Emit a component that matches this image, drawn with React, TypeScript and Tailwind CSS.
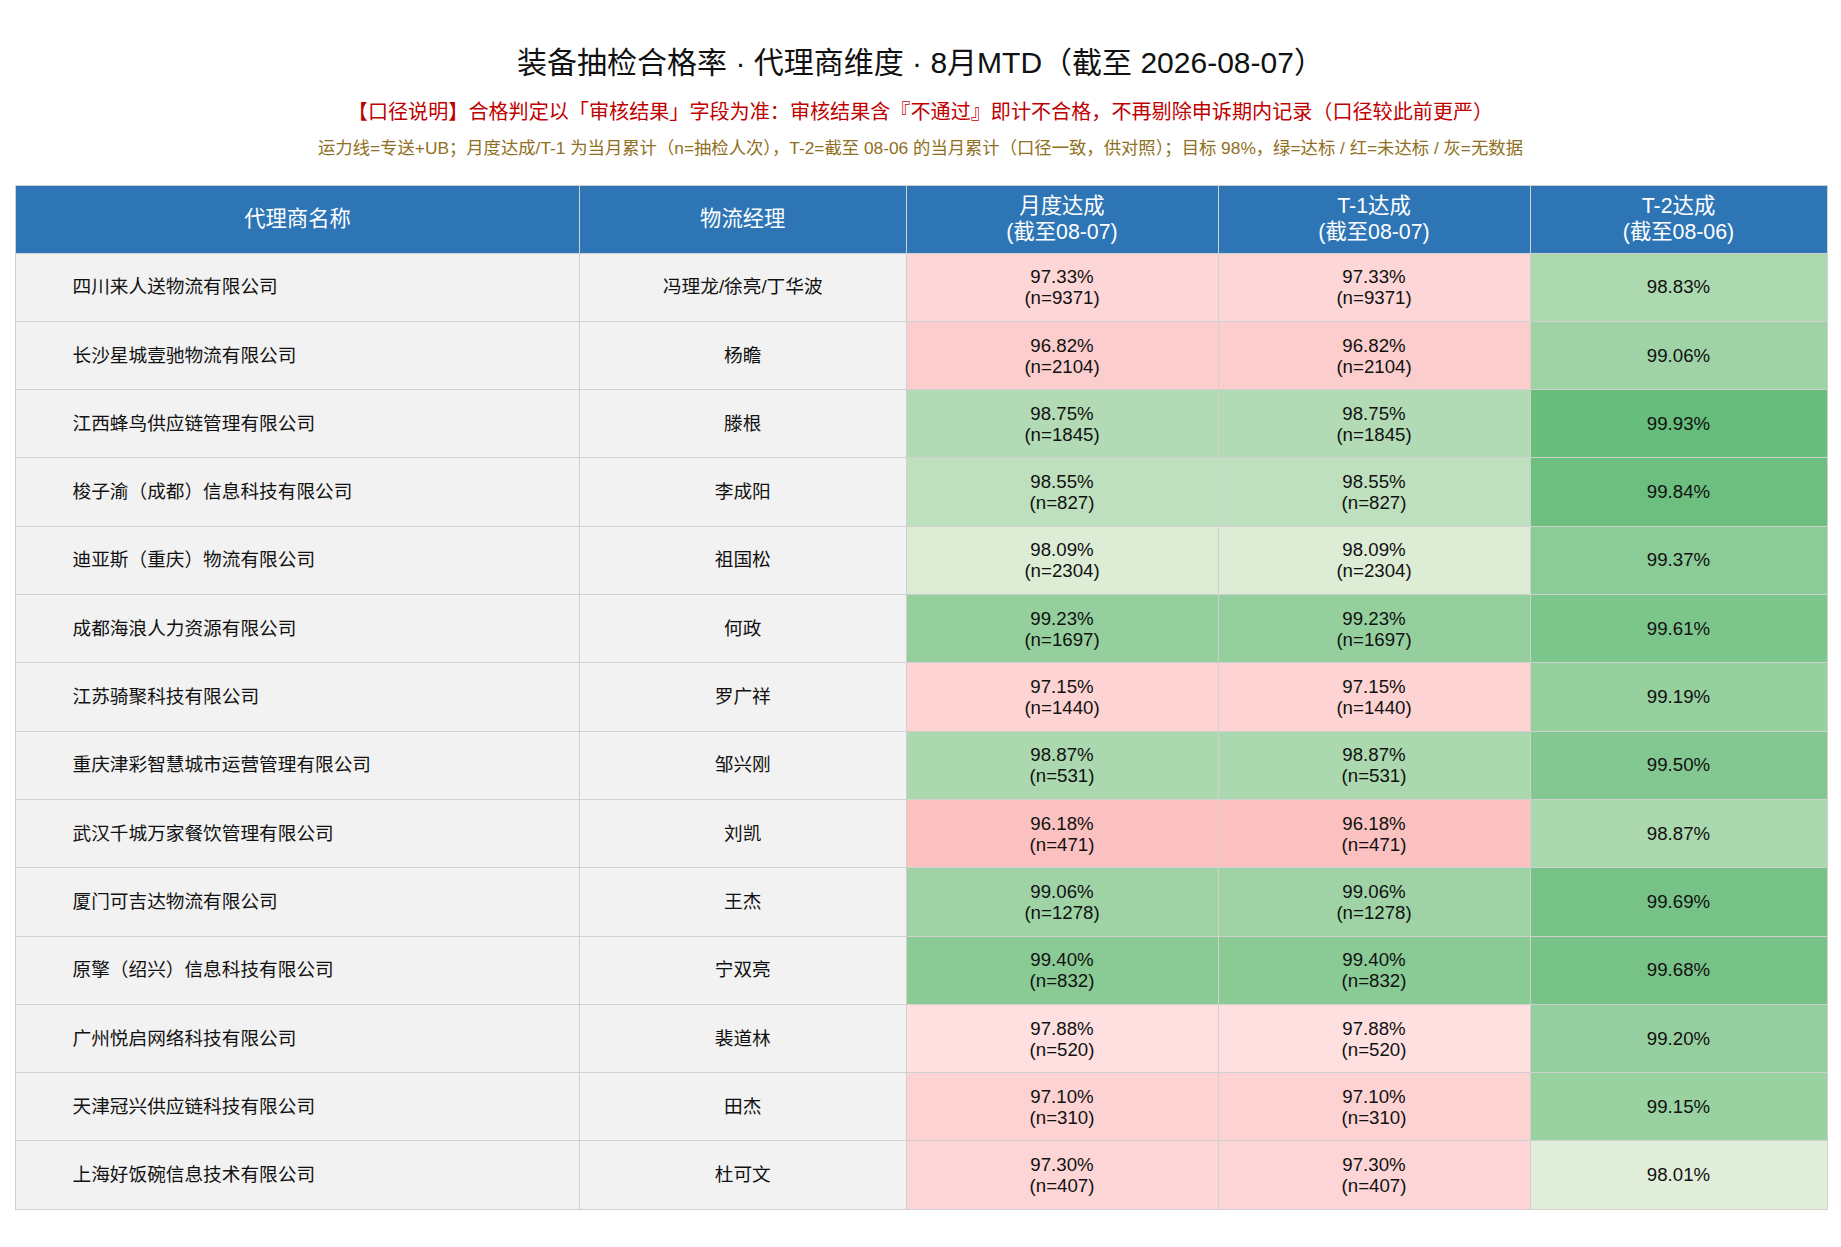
import React from "react";

type Row = {
  name: string;
  mgr: string;
  m: string;
  n: string;
  mBg: string;
  t2: string;
  t2Bg: string;
};

const rows: Row[] = [
  { name: "四川来人送物流有限公司", mgr: "冯理龙/徐亮/丁华波", m: "97.33%", n: "9371", mBg: "bg-[#fdd6d7]", t2: "98.83%", t2Bg: "bg-[#add9b1]" },
  { name: "长沙星城壹驰物流有限公司", mgr: "杨瞻", m: "96.82%", n: "2104", mBg: "bg-[#fccdcd]", t2: "99.06%", t2Bg: "bg-[#9fd3a6]" },
  { name: "江西蜂鸟供应链管理有限公司", mgr: "滕根", m: "98.75%", n: "1845", mBg: "bg-[#b2dbb5]", t2: "99.93%", t2Bg: "bg-[#67bd7c]" },
  { name: "梭子渝（成都）信息科技有限公司", mgr: "李成阳", m: "98.55%", n: "827", mBg: "bg-[#bfe0be]", t2: "99.84%", t2Bg: "bg-[#6dbf80]" },
  { name: "迪亚斯（重庆）物流有限公司", mgr: "祖国松", m: "98.09%", n: "2304", mBg: "bg-[#dcecd5]", t2: "99.37%", t2Bg: "bg-[#8bcb97]" },
  { name: "成都海浪人力资源有限公司", mgr: "何政", m: "99.23%", n: "1697", mBg: "bg-[#94cf9d]", t2: "99.61%", t2Bg: "bg-[#7cc58b]" },
  { name: "江苏骑聚科技有限公司", mgr: "罗广祥", m: "97.15%", n: "1440", mBg: "bg-[#fdd3d3]", t2: "99.19%", t2Bg: "bg-[#96d09f]" },
  { name: "重庆津彩智慧城市运营管理有限公司", mgr: "邹兴刚", m: "98.87%", n: "531", mBg: "bg-[#abd8af]", t2: "99.50%", t2Bg: "bg-[#83c890]" },
  { name: "武汉千城万家餐饮管理有限公司", mgr: "刘凯", m: "96.18%", n: "471", mBg: "bg-[#fbc1c1]", t2: "98.87%", t2Bg: "bg-[#abd8af]" },
  { name: "厦门可吉达物流有限公司", mgr: "王杰", m: "99.06%", n: "1278", mBg: "bg-[#9fd3a6]", t2: "99.69%", t2Bg: "bg-[#77c387]" },
  { name: "原擎（绍兴）信息科技有限公司", mgr: "宁双亮", m: "99.40%", n: "832", mBg: "bg-[#89ca95]", t2: "99.68%", t2Bg: "bg-[#77c387]" },
  { name: "广州悦启网络科技有限公司", mgr: "裴道林", m: "97.88%", n: "520", mBg: "bg-[#fee0e1]", t2: "99.20%", t2Bg: "bg-[#96cf9f]" },
  { name: "天津冠兴供应链科技有限公司", mgr: "田杰", m: "97.10%", n: "310", mBg: "bg-[#fdd2d2]", t2: "99.15%", t2Bg: "bg-[#99d1a1]" },
  { name: "上海好饭碗信息技术有限公司", mgr: "杜可文", m: "97.30%", n: "407", mBg: "bg-[#fdd5d6]", t2: "98.01%", t2Bg: "bg-[#e1eed9]" },
];

const gridCols = "grid grid-cols-[564px_326.5px_312px_312px_297px]";

function HeaderCell({ children }: { children: React.ReactNode }) {
  return (
    <div className="flex flex-col items-center justify-center border-r border-[#d0d0d0] bg-[#2e75b6] text-center text-[21.33px] leading-[26.7px] text-white">
      {children}
    </div>
  );
}

function PctCell({ pct, n, bg }: { pct: string; n: string; bg: string }) {
  return (
    <div className={`flex flex-col items-center justify-center border-r border-[#d0d0d0] text-[18.67px] leading-[21px] ${bg}`}>
      <span>{pct}</span>
      <span>(n={n})</span>
    </div>
  );
}

export default function App() {
  return (
    <div className="min-h-screen bg-white font-['Liberation_Sans','Noto_Sans_CJK_SC',sans-serif] text-[#111111]">
      <div className="flex flex-col items-center pt-[44px]">
        <h1 className="text-[30px] font-normal leading-[38px] text-[#111111]">
          装备抽检合格率 · 代理商维度 · 8月MTD（截至 2026-08-07）
        </h1>
        <p className="mt-[15px] text-[20.1px] leading-[30px] text-[#c00000]">
          【口径说明】合格判定以「审核结果」字段为准：审核结果含『不通过』即计不合格，不再剔除申诉期内记录（口径较此前更严）
        </p>
        <p className="mt-[7.5px] text-[17.33px] leading-[26px] text-[#8f6f22]">
          运力线=专送+UB；月度达成/T-1 为当月累计（n=抽检人次），T-2=截至 08-06 的当月累计（口径一致，供对照）；目标 98%，绿=达标 / 红=未达标 / 灰=无数据
        </p>
      </div>

      <div className="ml-[15px] mt-[24.5px] w-[1812.5px] border-l border-t border-[#d0d0d0]">
        <div className={`${gridCols} h-[67.6px] border-b border-[#d0d0d0]`}>
          <HeaderCell>代理商名称</HeaderCell>
          <HeaderCell>物流经理</HeaderCell>
          <HeaderCell>
            <span>月度达成</span>
            <span>(截至08-07)</span>
          </HeaderCell>
          <HeaderCell>
            <span>T-1达成</span>
            <span>(截至08-07)</span>
          </HeaderCell>
          <HeaderCell>
            <span>T-2达成</span>
            <span>(截至08-06)</span>
          </HeaderCell>
        </div>

        {rows.map((r) => (
          <div key={r.name} className={`${gridCols} h-[68.3px] border-b border-[#d0d0d0]`}>
            <div className="flex items-center border-r border-[#d0d0d0] bg-[#f2f2f2] pl-[56.5px] text-[18.67px]">
              {r.name}
            </div>
            <div className="flex items-center justify-center border-r border-[#d0d0d0] bg-[#f2f2f2] text-[18.67px]">
              {r.mgr}
            </div>
            <PctCell pct={r.m} n={r.n} bg={r.mBg} />
            <PctCell pct={r.m} n={r.n} bg={r.mBg} />
            <div className={`flex items-center justify-center border-r border-[#d0d0d0] text-[18.67px] ${r.t2Bg}`}>
              {r.t2}
            </div>
          </div>
        ))}
      </div>
    </div>
  );
}
